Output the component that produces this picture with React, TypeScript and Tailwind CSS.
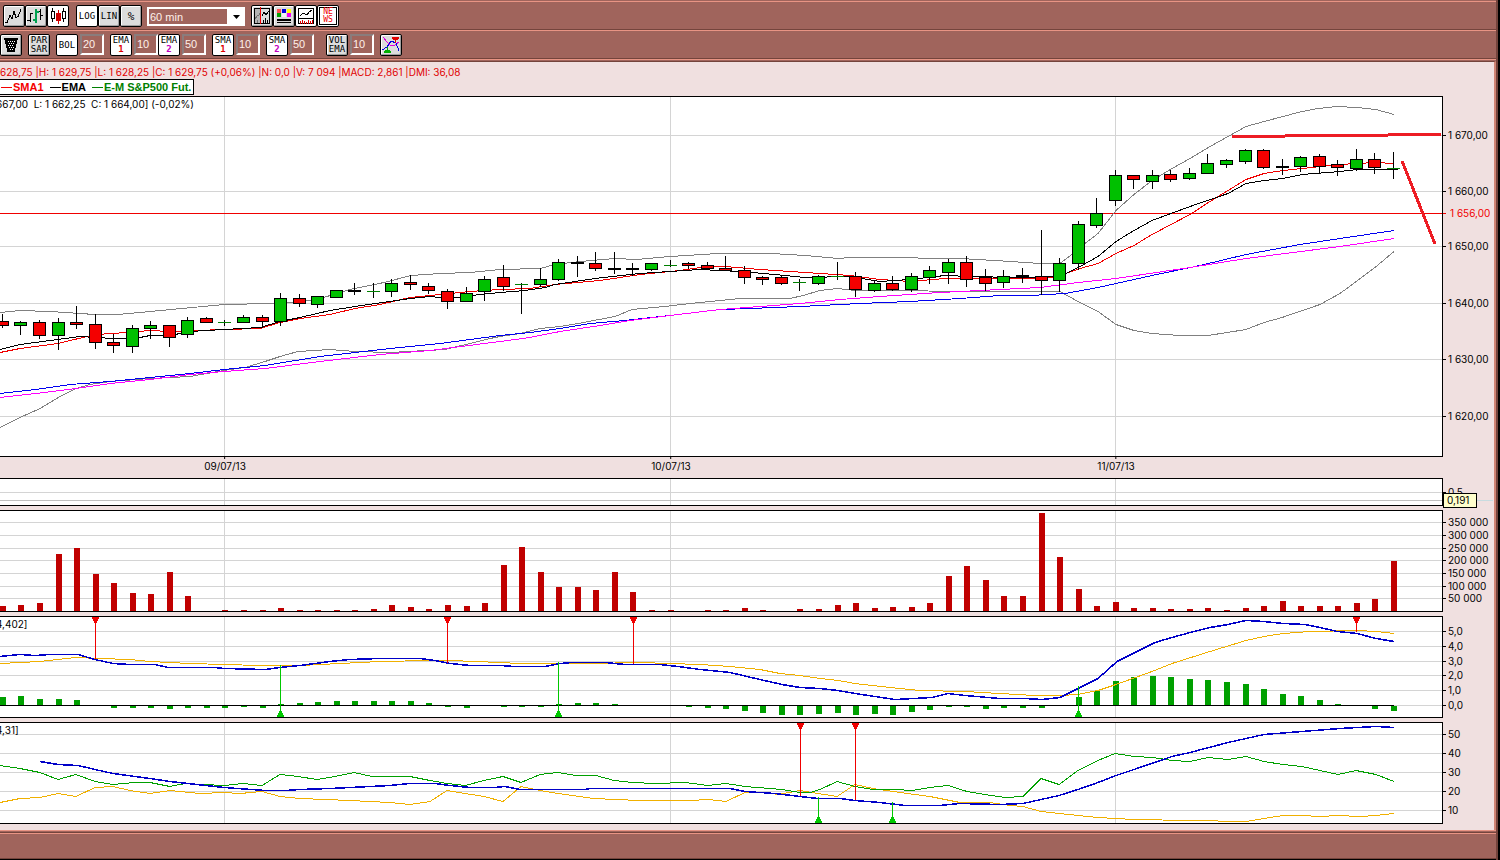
import type { ReactNode } from "react";
import clsx from "clsx";

type Pt = [number, number];
type Kind = "g" | "r" | "k" | "d";
type Candle = [high: number, top: number, bottom: number, low: number, kind: Kind];

const PLOT_WIDTH = 1442;
const GRID = "#d4d4d4";
const SESSIONS = [
    { slot: 12, date: "09/07/13" },
    { slot: 36, date: "10/07/13" },
    { slot: 60, date: "11/07/13" },
];

const slotX = (i: number) => Math.floor(2.4 + i * 18.547);

// g = up, r = down, k = flat body, d = doji
const CANDLES: Candle[] = [
    [314, 321, 326, 328, "r"], [321, 322, 326, 335, "g"], [320, 322, 336, 339, "r"], [318, 322, 336, 350, "g"],
    [306, 322, 325, 329, "r"], [314, 324, 343, 349, "r"], [334, 342, 346, 353, "r"], [325, 328, 347, 353, "g"],
    [321, 325, 329, 339, "g"], [325, 325, 338, 347, "r"], [317, 320, 335, 338, "g"], [317, 318, 323, 323, "r"],
    [320, 322, 323, 326, "d"], [315, 317, 323, 323, "g"], [315, 317, 322, 328, "r"], [293, 298, 322, 326, "g"],
    [294, 298, 304, 307, "r"], [296, 296, 305, 308, "g"], [290, 290, 298, 298, "g"], [283, 290, 292, 295, "k"],
    [283, 291, 292, 298, "d"], [279, 283, 292, 297, "g"], [275, 282, 285, 290, "r"], [283, 286, 291, 294, "r"],
    [289, 291, 302, 309, "r"], [287, 293, 302, 302, "g"], [276, 279, 292, 301, "g"], [265, 277, 287, 291, "r"],
    [283, 284, 285, 314, "d"], [268, 279, 285, 287, "g"], [259, 262, 280, 281, "g"], [256, 262, 264, 277, "k"],
    [252, 263, 269, 271, "r"], [252, 268, 270, 274, "k"], [263, 268, 270, 276, "k"], [263, 263, 270, 271, "g"],
    [260, 265, 266, 267, "d"], [262, 263, 266, 269, "r"], [262, 265, 269, 269, "r"], [256, 268, 271, 271, "r"],
    [266, 270, 278, 284, "r"], [276, 277, 280, 285, "r"], [276, 277, 284, 285, "r"], [279, 282, 283, 291, "d"],
    [275, 276, 284, 285, "g"], [262, 276, 277, 280, "d"], [272, 276, 290, 297, "r"], [280, 283, 291, 292, "g"],
    [276, 283, 290, 291, "r"], [273, 276, 290, 292, "g"], [266, 270, 278, 284, "g"], [259, 262, 273, 284, "g"],
    [256, 262, 280, 287, "r"], [269, 277, 284, 291, "r"], [270, 276, 283, 288, "g"], [268, 275, 277, 283, "k"],
    [230, 276, 281, 295, "r"], [258, 263, 281, 292, "g"], [221, 224, 264, 270, "g"], [198, 213, 226, 228, "g"],
    [170, 175, 201, 206, "g"], [175, 175, 180, 189, "r"], [170, 175, 182, 189, "g"], [170, 174, 180, 182, "r"],
    [168, 173, 179, 180, "g"], [154, 163, 174, 174, "g"], [159, 160, 165, 168, "g"], [149, 150, 162, 164, "g"],
    [149, 150, 168, 169, "r"], [159, 166, 168, 175, "k"], [156, 157, 167, 172, "g"], [154, 156, 167, 174, "r"],
    [160, 164, 168, 176, "r"], [149, 159, 169, 171, "g"], [153, 159, 168, 174, "r"], [152, 168, 169, 179, "d"],
];

const UPPER_BAND: Pt[] = [
    [0, 312], [20, 310], [50, 311], [95, 314], [118, 314], [150, 311], [224, 304], [270, 303], [290, 302], [317, 299],
    [350, 289], [384, 282], [411, 275], [440, 273], [470, 272], [500, 269], [540, 268], [555, 264], [580, 261],
    [615, 258], [637, 259], [670, 256], [718, 253], [771, 253], [805, 255], [838, 258], [850, 257], [910, 257],
    [925, 258], [960, 258], [995, 260], [1040, 263], [1060, 263], [1072, 254], [1085, 243], [1098, 233], [1116, 210],
    [1134, 194], [1152, 180], [1172, 168], [1190, 158], [1210, 146], [1228, 136], [1246, 126], [1264, 121],
    [1283, 116], [1302, 111], [1318, 108], [1337, 106], [1357, 107], [1376, 109], [1394, 114],
];
const LOWER_BAND: Pt[] = [
    [0, 427], [20, 417], [40, 408], [60, 396], [76, 388], [90, 384], [110, 381], [150, 378], [190, 376], [224, 370],
    [245, 367], [265, 361], [280, 356], [298, 351], [330, 349], [355, 351], [390, 352], [445, 349], [470, 343],
    [490, 338], [500, 336], [520, 333], [540, 328], [560, 326], [578, 323], [615, 316], [632, 309], [665, 306],
    [690, 303], [740, 298], [790, 298], [803, 295], [820, 290], [838, 288], [855, 290], [1000, 291], [1060, 291],
    [1078, 301], [1098, 311], [1116, 324], [1134, 330], [1152, 333], [1180, 335], [1208, 335], [1246, 329],
    [1264, 322], [1282, 317], [1320, 304], [1340, 293], [1375, 267], [1394, 251],
];
const SMA_FAST: Pt[] = [
    [0, 352], [20, 348], [58, 343], [95, 334], [113, 333], [150, 330], [170, 331], [224, 329], [260, 328], [280, 322],
    [300, 318], [330, 314], [355, 308], [380, 304], [410, 297], [440, 294], [470, 291], [500, 289], [530, 288],
    [555, 284], [600, 280], [640, 274], [680, 270], [700, 267], [725, 266], [760, 269], [790, 271], [850, 275],
    [880, 279], [910, 281], [945, 278], [1035, 278], [1060, 276], [1066, 273], [1080, 268], [1098, 263], [1116, 253],
    [1134, 245], [1152, 234], [1190, 214], [1210, 201], [1228, 190], [1246, 179], [1264, 173], [1283, 170],
    [1302, 168], [1340, 164], [1356, 163], [1376, 162], [1394, 163],
];
const EMA_FAST: Pt[] = [
    [0, 349], [20, 344], [50, 340], [80, 336], [113, 338], [135, 338], [150, 335], [170, 335], [190, 331], [224, 329],
    [260, 327], [280, 321], [300, 317], [330, 310], [355, 306], [410, 298], [430, 296], [450, 298], [480, 294],
    [500, 292], [525, 290], [545, 287], [555, 284], [595, 278], [640, 273], [670, 271], [700, 269], [740, 271],
    [775, 274], [805, 277], [850, 276], [880, 281], [910, 279], [945, 275], [970, 276], [1015, 277], [1060, 276],
    [1066, 273], [1080, 266], [1098, 256], [1116, 241], [1134, 230], [1152, 220], [1190, 206], [1228, 193],
    [1246, 183], [1264, 180], [1283, 178], [1302, 174], [1340, 171], [1357, 169], [1398, 169],
];
const EMA_SLOW: Pt[] = [
    [0, 393], [36, 389], [70, 384], [110, 381], [150, 377], [190, 373], [224, 369], [265, 365], [320, 356], [390, 348],
    [440, 343], [500, 335], [530, 332], [560, 328], [590, 323], [625, 320], [670, 315], [720, 309], [750, 308],
    [800, 306], [860, 303], [910, 301], [960, 298], [1000, 295], [1030, 295], [1065, 293], [1098, 287], [1152, 275],
    [1200, 265], [1246, 254], [1300, 244], [1340, 238], [1394, 230],
];
const SMA_SLOW: Pt[] = [
    [0, 397], [36, 393], [76, 388], [110, 383], [150, 379], [190, 374], [224, 371], [265, 368], [320, 361], [380, 354],
    [430, 350], [500, 341], [530, 337], [560, 331], [600, 325], [630, 320], [670, 315], [720, 309], [760, 306],
    [800, 303], [840, 299], [880, 296], [940, 292], [1000, 289], [1040, 287], [1078, 282], [1116, 278], [1190, 267],
    [1246, 258], [1340, 246], [1394, 238],
];

const VOLUME = [
    5, 6, 8, 57, 63, 37, 28, 18, 17, 39, 15, 0, 1, 1, 1, 3, 1, 1, 1, 1, 2, 6, 4, 2, 6, 5, 8, 46, 64, 39, 24, 24, 21, 39,
    19, 1, 1, 0, 1, 1, 3, 1, 0, 2, 2, 6, 8, 3, 4, 4, 8, 35, 45, 31, 15, 15, 98, 54, 22, 5, 9, 3, 3, 2, 2, 3, 1, 3, 5,
    10, 5, 5, 5, 8, 12, 50,
];
const HISTOGRAM = [
    8, 9, 6, 6, 5, 0, -2, -2, -2, -3, -2, -2, -2, -1, -2, 1, 2, 3, 4, 4, 4, 4, 4, 2, -1, -2, 0, -1, -1, -1, 1, 2, 2, 1,
    0, 0, 0, -1, -2, -3, -5, -7, -9, -9, -8, -7, -9, -8, -9, -6, -4, -1, -1, -3, -2, -2, -2, 0, 8, 14, 24, 28, 29, 28,
    26, 25, 23, 21, 16, 11, 9, 5, 1, 0, -3, -5,
];

const MACD_LINE: Pt[] = [
    [0, 656], [20, 654], [35, 655], [50, 654], [78, 654], [95, 659], [113, 663], [130, 664], [155, 664], [168, 667],
    [215, 667], [224, 668], [265, 669], [280, 667], [300, 665], [330, 661], [350, 659], [380, 658], [420, 658],
    [435, 660], [450, 663], [470, 665], [500, 665], [515, 666], [545, 666], [560, 663], [572, 662], [605, 662],
    [625, 664], [660, 664], [678, 666], [700, 669], [730, 672], [760, 679], [782, 684], [800, 687], [820, 688],
    [838, 690], [855, 693], [875, 696], [895, 699], [932, 697], [948, 693], [965, 695], [1000, 698], [1025, 698],
    [1042, 699], [1060, 697], [1078, 688], [1098, 678], [1117, 661], [1135, 652], [1155, 642], [1172, 637],
    [1190, 632], [1210, 627], [1228, 624], [1246, 620], [1264, 621], [1283, 623], [1305, 624], [1320, 627],
    [1337, 631], [1357, 633], [1376, 638], [1394, 641],
];
const MACD_SIGNAL: Pt[] = [
    [0, 663], [40, 661], [76, 657], [100, 658], [130, 659], [150, 661], [190, 663], [224, 664], [260, 665], [300, 665],
    [340, 663], [380, 661], [430, 660], [450, 660], [500, 662], [520, 663], [590, 663], [640, 662], [700, 664],
    [730, 666], [760, 669], [780, 673], [800, 675], [820, 678], [838, 680], [855, 683], [890, 687], [920, 690],
    [965, 691], [1000, 693], [1035, 695], [1060, 695], [1078, 694], [1098, 690], [1116, 684], [1152, 671],
    [1172, 663], [1210, 651], [1246, 640], [1264, 636], [1283, 633], [1310, 631], [1357, 630], [1376, 631],
    [1394, 633],
];
const DI_PLUS: Pt[] = [
    [0, 765], [20, 768], [40, 772], [58, 779], [76, 774], [95, 781], [113, 784], [135, 782], [150, 782], [170, 786],
    [185, 783], [224, 785], [243, 783], [262, 785], [280, 774], [298, 776], [317, 779], [335, 776], [354, 772],
    [372, 776], [410, 776], [430, 780], [447, 783], [465, 785], [484, 780], [503, 776], [521, 782], [540, 774],
    [558, 772], [576, 775], [596, 775], [614, 780], [633, 782], [655, 783], [685, 782], [708, 785], [726, 783],
    [745, 786], [782, 789], [800, 792], [810, 792], [820, 789], [837, 781], [855, 786], [873, 789], [895, 789],
    [912, 790], [930, 787], [948, 785], [967, 791], [985, 794], [1005, 797], [1023, 796], [1041, 778], [1059, 784],
    [1078, 770], [1098, 760], [1115, 753], [1134, 756], [1153, 757], [1172, 760], [1190, 761], [1208, 757],
    [1228, 759], [1246, 756], [1264, 761], [1283, 764], [1302, 766], [1338, 774], [1356, 770], [1376, 774],
    [1394, 781],
];
const DI_MINUS: Pt[] = [
    [0, 802], [20, 798], [40, 797], [58, 793], [76, 796], [95, 787], [113, 786], [130, 790], [150, 793], [170, 790],
    [200, 793], [224, 792], [240, 793], [262, 791], [280, 796], [300, 798], [350, 800], [390, 802], [410, 804],
    [430, 801], [447, 790], [465, 793], [484, 796], [503, 801], [521, 786], [540, 790], [558, 793], [593, 798],
    [640, 800], [690, 800], [708, 799], [726, 801], [745, 792], [765, 792], [778, 794], [800, 790], [818, 793],
    [837, 796], [855, 784], [873, 788], [900, 792], [930, 796], [960, 802], [990, 802], [1010, 805], [1023, 806],
    [1041, 811], [1059, 813], [1098, 817], [1134, 819], [1190, 820], [1246, 821], [1264, 818], [1283, 815],
    [1302, 815], [1320, 816], [1338, 815], [1360, 816], [1376, 815], [1394, 813],
];
const ADX: Pt[] = [
    [40, 761], [58, 764], [78, 765], [95, 769], [113, 773], [150, 778], [170, 781], [224, 787], [265, 790], [285, 790],
    [300, 789], [330, 788], [350, 787], [390, 785], [410, 783], [435, 783], [450, 785], [470, 787], [495, 787],
    [505, 786], [520, 789], [585, 789], [590, 788], [730, 788], [745, 791], [775, 793], [800, 796], [818, 798],
    [840, 798], [855, 800], [880, 802], [905, 805], [940, 805], [960, 803], [1000, 804], [1023, 803], [1041, 799],
    [1059, 795], [1078, 789], [1098, 782], [1116, 775], [1134, 769], [1172, 756], [1190, 752], [1228, 742],
    [1264, 734], [1302, 731], [1340, 728], [1376, 726], [1394, 727],
];

const Line = ({ points, color, width = 1 }: { points: Pt[]; color: string; width?: number }) => (
    <polyline
        points={points.map(([x, y]) => `${x},${y + 0.5}`).join(" ")}
        fill="none"
        stroke={color}
        strokeWidth={width}
    />
)

const SellMark = ({ x, top, to }: { x: number; top: number; to: number }) => (
    <g fill="#f00000">
        <rect x={x} y={top} width="1" height={to - top} />
        <path d={`M${x - 3} ${top}h7v2h-1v2h-1v2h-3v-2h-1v-2h-1z`} />
    </g>
)

const BuyMark = ({ x, bottom, from }: { x: number; bottom: number; from: number }) => (
    <g fill="#00c800">
        <rect x={x} y={from} width="1" height={bottom - from} />
        <path d={`M${x - 3} ${bottom}h7v-2h-1v-2h-1v-2h-3v2h-1v2h-1z`} />
    </g>
)

const CandleShape = ({ x, candle }: { x: number; candle: Candle }) => {
    const [high, top, bottom, low, kind] = candle
    if (kind === "d") {
        return (
            <g>
                <rect x={x} y={high} width="1" height={low - high} fill="#000" />
                <rect x={x - 6} y={top} width="13" height="1" fill="#008000" />
            </g>
        )
    }
    return (
        <g>
            <rect x={x} y={high} width="1" height={low - high} fill="#000" />
            <rect x={x - 6} y={top} width="13" height={bottom - top} fill="#000" />
            {kind !== "k" && (
                <rect x={x - 5} y={top + 1} width="11" height={bottom - top - 2} fill={kind === "g" ? "#00c000" : "#f40000"} />
            )}
        </g>
    )
}

interface PanelProps {
    name: string;
    top: number;
    size: number;
    heightClass: string;
    levels: { y: number; label: string; color?: string }[];
    caption?: string;
    axisExtra?: ReactNode;
    children?: ReactNode;
}

function Panel({ name, top, size, heightClass, levels, caption, axisExtra, children }: PanelProps) {
    return (
        <div className={clsx("flex", heightClass)}>
            <div className="relative min-w-0 flex-1 overflow-hidden border-y border-r border-black bg-white">
                <svg
                    role="img"
                    aria-label={name}
                    className="block h-full w-full"
                    viewBox={`0 ${top + 1} ${PLOT_WIDTH} ${size - 2}`}
                    preserveAspectRatio="none"
                    shapeRendering="crispEdges"
                >
                    {levels.map((l) => !l.color && (
                        <rect key={l.label} x="0" y={l.y} width={PLOT_WIDTH} height="1" fill={GRID} />
                    ))}
                    {SESSIONS.map((s) => (
                        <rect key={s.slot} x={slotX(s.slot)} y={top} width="1" height={size} fill={GRID} />
                    ))}
                    {children}
                </svg>
                {caption && (
                    <p className="absolute top-0 left-0 -ml-1 text-[10px] leading-[14px] whitespace-pre">{caption}</p>
                )}
            </div>
            <svg className="block h-full w-[51px] shrink-0 overflow-visible" viewBox={`0 ${top} 51 ${size}`} shapeRendering="crispEdges">
                {levels.map((l) => (
                    <g key={l.label} fill={l.color ?? "#000"}>
                        <rect x="0" y={l.y} width="3" height="1" />
                        <text x={l.color ? 7 : 5} y={l.y + 4} fontSize="10">{l.label}</text>
                    </g>
                ))}
                {axisExtra}
            </svg>
        </div>
    )
}

interface ToolButtonProps {
    label: string;
    active?: boolean;
    children: ReactNode;
}

const ToolButton = ({ label, active, children }: ToolButtonProps) => (
    <button
        type="button"
        aria-label={label}
        className={clsx(
            "flex h-[22px] w-[22px] shrink-0 flex-col items-center justify-center rounded-xs border border-black font-['DejaVu_Sans_Mono',monospace] text-[9px] leading-[9px] text-black",
            active ? "bg-white" : "bg-[#dcdcdc] shadow-[inset_1px_1px_0_#ffffff,inset_-1px_-1px_0_#a0a0a0]"
        )}
    >
        {children}
    </button>
)

const Icon = ({ children }: { children: ReactNode }) => (
    <svg className="block h-5 w-5 shrink-0" viewBox="0 0 20 20" fill="none" shapeRendering="crispEdges">{children}</svg>
)

const Period = ({ label, value }: { label: string; value: string }) => (
    <input
        aria-label={label}
        defaultValue={value}
        className="ml-0.5 h-[21px] w-6 shrink-0 border-2 border-t-[#8a7c7c] border-l-[#8a7c7c] border-r-white border-b-white bg-[#a0645c] px-px pb-0.5 font-['Liberation_Sans',Arial,sans-serif] text-[11px] text-[#fff0ea] outline-none"
    />
)

const Toolbar = ({ children }: { children: ReactNode }) => (
    <div className="flex items-start overflow-hidden border-t border-b border-t-[#e89484] border-b-[#74443c] pt-[3px]">
        {children}
    </div>
)

function ChartStyleBar() {
    return (
        <Toolbar>
            <div className="flex h-[24px] pl-[3px]">
                <ToolButton label="Line chart">
                    <Icon><path d="M1 16.5h2l3-7 2 3 2-7 2 6 2-1 3-7" stroke="#000" /></Icon>
                </ToolButton>
                <ToolButton label="Bar chart">
                    <Icon>
                        <path d="M4.5 7v9M1 14.5h3M5 7.5h2M14.5 3v11M12 5.5h2M15 9.5h2" stroke="#000" />
                        <path d="M9 3h2v14h-2zM7 13h2v2h-2zM11 5h2v2h-2z" fill="#00a050" />
                    </Icon>
                </ToolButton>
                <ToolButton label="Candlestick chart" active>
                    <Icon>
                        <path d="M4.5 2v3M4.5 13v3M3.5 5.5h3v7h-3zM15.5 2v3M15.5 13v3M14.5 5.5h3v7h-3z" stroke="#000" />
                        <path d="M10 4h1v3h2v8h-2v3h-1v-3h-2v-8h2z" fill="#d00000" />
                    </Icon>
                </ToolButton>
            </div>
            <div className="ml-[7px] flex">
                <ToolButton label="Logarithmic scale" active>LOG</ToolButton>
                <ToolButton label="Linear scale">LIN</ToolButton>
                <ToolButton label="Percent scale"><span className="text-[11px]">%</span></ToolButton>
            </div>
            <div className="relative ml-[5px] mt-0.5 shrink-0">
                <select
                    aria-label="Timeframe"
                    defaultValue="60 min"
                    className="block h-[19px] w-[98px] appearance-none border-2 border-white border-r-[18px] bg-[#a0645c] pl-px font-['Liberation_Sans',Arial,sans-serif] text-[11px] leading-[14px] text-[#fff0ea] outline-none"
                >
                    <option>60 min</option>
                </select>
                <svg className="pointer-events-none absolute top-2 right-[5px] h-1 w-[7px]" viewBox="0 0 7 4">
                    <path d="M0 0h7L3.5 4z" fill="#000" />
                </svg>
            </div>
            <div className="ml-1.5 flex">
                <ToolButton label="Crosshair">
                    <Icon>
                        <path d="M2 2h7v16h-7z" fill="#b4b4b4" />
                        <path d="M2.5 2.5h15v15h-15z" stroke="#000" />
                        <path d="M10 10l2-4 2 3 3-4" stroke="#000" />
                        <path d="M3 13l2-3 2-1 2-3M5.5 14v3" stroke="#707070" />
                        <path d="M11.5 14v3M13.5 12v5M15.5 14v3" stroke="#000" />
                        <path d="M8 1h1v17h-1z" fill="#f00000" />
                    </Icon>
                </ToolButton>
                <ToolButton label="Colours">
                    <Icon>
                        <path d="M3 3h4v4h-4z" fill="#ff5050" />
                        <path d="M8 3h4v4h-4z" fill="#0000e0" />
                        <path d="M13 3h4v4h-4z" fill="#ffff00" />
                        <path d="M3 7h4v4h-4z" fill="#00a000" />
                        <path d="M8 7h4v4h-4z" fill="#f4f4f4" />
                        <path d="M13 7h4v4h-4z" fill="#f000f0" />
                        <path d="M3 13h14v2h-14zM3 16h14v1h-14z" fill="#000" />
                    </Icon>
                </ToolButton>
                <ToolButton label="Indicators" active>
                    <Icon>
                        <path d="M2.5 2.5h15v15h-15z" stroke="#000" />
                        <path d="M2 12.5h16M4 10l3-3 2 1 2 1 2-3 3-2" stroke="#000" />
                        <path d="M4.5 15v3M6.5 14v4M8.5 15v3M10.5 16v2M12.5 14v4M14.5 15v3M16.5 14v4" stroke="#e00000" />
                    </Icon>
                </ToolButton>
                <ToolButton label="News" active>
                    <span className="flex h-[18px] w-[18px] flex-col items-center justify-center border border-black text-[8px] leading-[8px] text-[#f00000]">
                        <span>NE</span>
                        <span>WS</span>
                    </span>
                </ToolButton>
            </div>
        </Toolbar>
    )
}

const Stack = ({ name, n, color }: { name: string; n: string; color: string }) => (
    <>
        <span>{name}</span>
        <span className={clsx("font-bold", color)}>{n}</span>
    </>
)

function IndicatorBar() {
    return (
        <Toolbar>
            <div className="flex h-[24px]">
                <ToolButton label="Filter">
                    <Icon>
                        <path d="M3 3h14v2h-1v4h-1v4h-1v4h-8v-4h-1v-4h-1v-4h-1z" fill="#000" />
                        <path d="M7 6.5h7M8 8.5h6M7 10.5h6M8 12.5h5M9 14.5h3" stroke="#fff" strokeDasharray="1 1" />
                    </Icon>
                </ToolButton>
            </div>
            <div className="ml-1.5 flex">
                <ToolButton label="Parabolic SAR"><span>PAR</span><span>SAR</span></ToolButton>
            </div>
            <div className="ml-1.5 flex">
                <ToolButton label="Bollinger bands" active>BOL</ToolButton>
                <Period label="Bollinger period" value="20" />
            </div>
            <div className="ml-1.5 flex">
                <ToolButton label="EMA 1" active><Stack name="EMA" n="1" color="text-[#e00000]" /></ToolButton>
                <Period label="EMA 1 period" value="10" />
                <ToolButton label="EMA 2" active><Stack name="EMA" n="2" color="text-[#c000c0]" /></ToolButton>
                <Period label="EMA 2 period" value="50" />
            </div>
            <div className="ml-1.5 flex">
                <ToolButton label="SMA 1" active><Stack name="SMA" n="1" color="text-[#e00000]" /></ToolButton>
                <Period label="SMA 1 period" value="10" />
            </div>
            <div className="ml-1.5 flex">
                <ToolButton label="SMA 2" active><Stack name="SMA" n="2" color="text-[#c000c0]" /></ToolButton>
                <Period label="SMA 2 period" value="50" />
            </div>
            <div className="ml-3 flex">
                <ToolButton label="Volume EMA"><span>VOL</span><span>EMA</span></ToolButton>
                <Period label="Volume EMA period" value="10" />
            </div>
            <div className="ml-1.5 flex">
                <ToolButton label="Signals">
                    <Icon>
                        <path d="M2 2l4 5 4 4 4-1 4-3" stroke="#e000e0" />
                        <path d="M1 15l5-3 4-6 5 2 3 8" stroke="#0000e0" />
                        <path d="M11 2h7v2h-1v1h-2v3h-1v-3h-2v-1h-1z" fill="#e00000" />
                        <path d="M3 18h7v-2h-1v-1h-2v-3h-1v3h-2v1h-1z" fill="#00b000" />
                    </Icon>
                </ToolButton>
            </div>
        </Toolbar>
    )
}

const LegendItem = ({ name, color }: { name: string; color: string }) => (
    <span className={clsx("flex items-center gap-px", color)}>
        <span className="h-px w-[11px] bg-current" />
        {name}
    </span>
)

function App() {
    return (
        <main className="flex min-h-screen border-r-2 border-r-black bg-[#a0645c] font-['Inter','Liberation_Sans',sans-serif] text-black">
            <div className="flex min-w-0 flex-1 flex-col border-r-2 border-r-[#74443c] pt-px">
                <ChartStyleBar />
                <IndicatorBar />
                <section className="border-t border-t-[#e89484] pt-px">
                    <div className="border-t border-r-2 border-t-[#74443c] border-r-[#d08474] bg-[#f0e0e0] pb-1.5">
                        <div className="h-[34px] pt-[3px] text-[10px] leading-[14px]">
                            <p className="whitespace-nowrap text-[#e00000]">
                                628,75 |H: 1 629,75 |L: 1 628,25 |C: 1 629,75 (+0,06%) |N: 0,0 |V: 7 094 |MACD: 2,861 |DMI: 36,08
                            </p>
                            <div className="flex h-4 w-[194px] items-center gap-1.5 border border-l-0 border-black bg-white pl-px font-['Liberation_Sans',Arial,sans-serif] text-[11px] font-bold whitespace-nowrap">
                                <LegendItem name="SMA1" color="text-[#f40000]" />
                                <LegendItem name="EMA" color="text-black" />
                                <LegendItem name="E-M S&P500 Fut." color="text-[#008000]" />
                            </div>
                        </div>
                        <Panel
                            name="E-M S&P500 Fut. price"
                            top={96}
                            size={361}
                            heightClass="h-[361px]"
                            caption="667,00  L: 1 662,25  C: 1 664,00] (-0,02%)"
                            levels={[
                                { y: 135, label: "1 670,00" },
                                { y: 191, label: "1 660,00" },
                                { y: 213, label: "1 656,00", color: "#f00000" },
                                { y: 246, label: "1 650,00" },
                                { y: 303, label: "1 640,00" },
                                { y: 359, label: "1 630,00" },
                                { y: 416, label: "1 620,00" },
                            ]}
                        >
                            <rect x="0" y="213" width={PLOT_WIDTH} height="1" fill="#f00000" />
                            <Line points={UPPER_BAND} color="#808080" />
                            <Line points={LOWER_BAND} color="#808080" />
                            <Line points={EMA_SLOW} color="#0000f0" />
                            <Line points={SMA_SLOW} color="#ff00ff" />
                            <Line points={SMA_FAST} color="#f00000" />
                            <Line points={EMA_FAST} color="#000" />
                            {CANDLES.map((c, i) => <CandleShape key={i} x={slotX(i)} candle={c} />)}
                            <path d="M1232 135h53v-1h103v-1h53v3h-53v1h-103v1h-53z" fill="#ed1c24" />
                            <path d="M1402 161l33 83" stroke="#ed1c24" strokeWidth="3" />
                        </Panel>
                        <div className="relative mr-[52px] h-[21px] text-[10px] leading-[14px]">
                            {SESSIONS.map((s) => (
                                <div
                                    key={s.slot}
                                    className="absolute top-0 flex -translate-x-1/2 flex-col items-center"
                                    style={{ left: `${((slotX(s.slot) + 1) / PLOT_WIDTH) * 100}%` }}
                                >
                                    <span className="h-0.5 w-px bg-black" />
                                    <span>{s.date}</span>
                                </div>
                            ))}
                        </div>
                        <div className="flex flex-col gap-1">
                            <Panel
                                name="Crosshair value"
                                top={478}
                                size={28}
                                heightClass="h-7"
                                levels={[{ y: 492, label: "0,5" }]}
                                axisExtra={
                                    <>
                                        <rect x="34" y="500" width="16" height="1" fill="#c8dce0" />
                                        <rect x="0" y="493" width="34" height="15" fill="#000" />
                                        <rect x="1" y="494" width="32" height="13" fill="#ffffcc" />
                                        <text x="4" y="504" fontSize="10">0,191</text>
                                    </>
                                }
                            >
                                <rect x="0" y="500" width={PLOT_WIDTH} height="1" fill="#c0c0c0" />
                            </Panel>
                            <Panel
                                name="Volume"
                                top={510}
                                size={102}
                                heightClass="h-[102px]"
                                levels={[
                                    { y: 522, label: "350 000" },
                                    { y: 535, label: "300 000" },
                                    { y: 548, label: "250 000" },
                                    { y: 560, label: "200 000" },
                                    { y: 573, label: "150 000" },
                                    { y: 586, label: "100 000" },
                                    { y: 598, label: "50 000" },
                                ]}
                            >
                                {VOLUME.map((v, i) => (
                                    <rect key={i} x={slotX(i) - 2} y={611 - v} width="6" height={v} fill="#c00000" />
                                ))}
                            </Panel>
                            <Panel
                                name="MACD"
                                top={616}
                                size={102}
                                heightClass="h-[102px]"
                                caption="4,402]"
                                levels={[
                                    { y: 631, label: "5,0" },
                                    { y: 646, label: "4,0" },
                                    { y: 661, label: "3,0" },
                                    { y: 675, label: "2,0" },
                                    { y: 690, label: "1,0" },
                                    { y: 705, label: "0,0" },
                                ]}
                            >
                                {HISTOGRAM.map((v, i) => (
                                    <rect key={i} x={slotX(i) - 2} y={v > 0 ? 705 - v : 706} width="6" height={Math.abs(v)} fill="#00a000" />
                                ))}
                                <rect x="0" y="705" width="1394" height="1" fill="#000" />
                                <Line points={MACD_SIGNAL} color="#f0b000" />
                                <Line points={MACD_LINE} color="#0000c8" width={1.5} />
                                <SellMark x={95} top={617} to={659} />
                                <SellMark x={447} top={617} to={663} />
                                <SellMark x={633} top={617} to={664} />
                                <SellMark x={1356} top={617} to={632} />
                                <BuyMark x={280} from={665} bottom={717} />
                                <BuyMark x={558} from={662} bottom={717} />
                                <BuyMark x={1078} from={686} bottom={717} />
                            </Panel>
                            <Panel
                                name="DMI"
                                top={722}
                                size={102}
                                heightClass="h-[102px]"
                                caption="4,31]"
                                levels={[
                                    { y: 734, label: "50" },
                                    { y: 753, label: "40" },
                                    { y: 772, label: "30" },
                                    { y: 791, label: "20" },
                                    { y: 810, label: "10" },
                                ]}
                            >
                                <Line points={DI_MINUS} color="#f0b000" />
                                <Line points={DI_PLUS} color="#00a000" />
                                <Line points={ADX} color="#0000c8" width={1.5} />
                                <SellMark x={800} top={723} to={796} />
                                <SellMark x={855} top={723} to={800} />
                                <BuyMark x={818} from={797} bottom={823} />
                                <BuyMark x={892} from={802} bottom={823} />
                            </Panel>
                        </div>
                    </div>
                </section>
                <div className="h-[3px] border-t border-b border-t-[#e89484] border-b-[#74443c]" />
                <footer className="flex-1 border-t border-t-[#e89484] pb-6" />
                <div className="h-[3px] border-t border-t-[#74443c] bg-black" />
            </div>
        </main>
    )
}

export default App;
